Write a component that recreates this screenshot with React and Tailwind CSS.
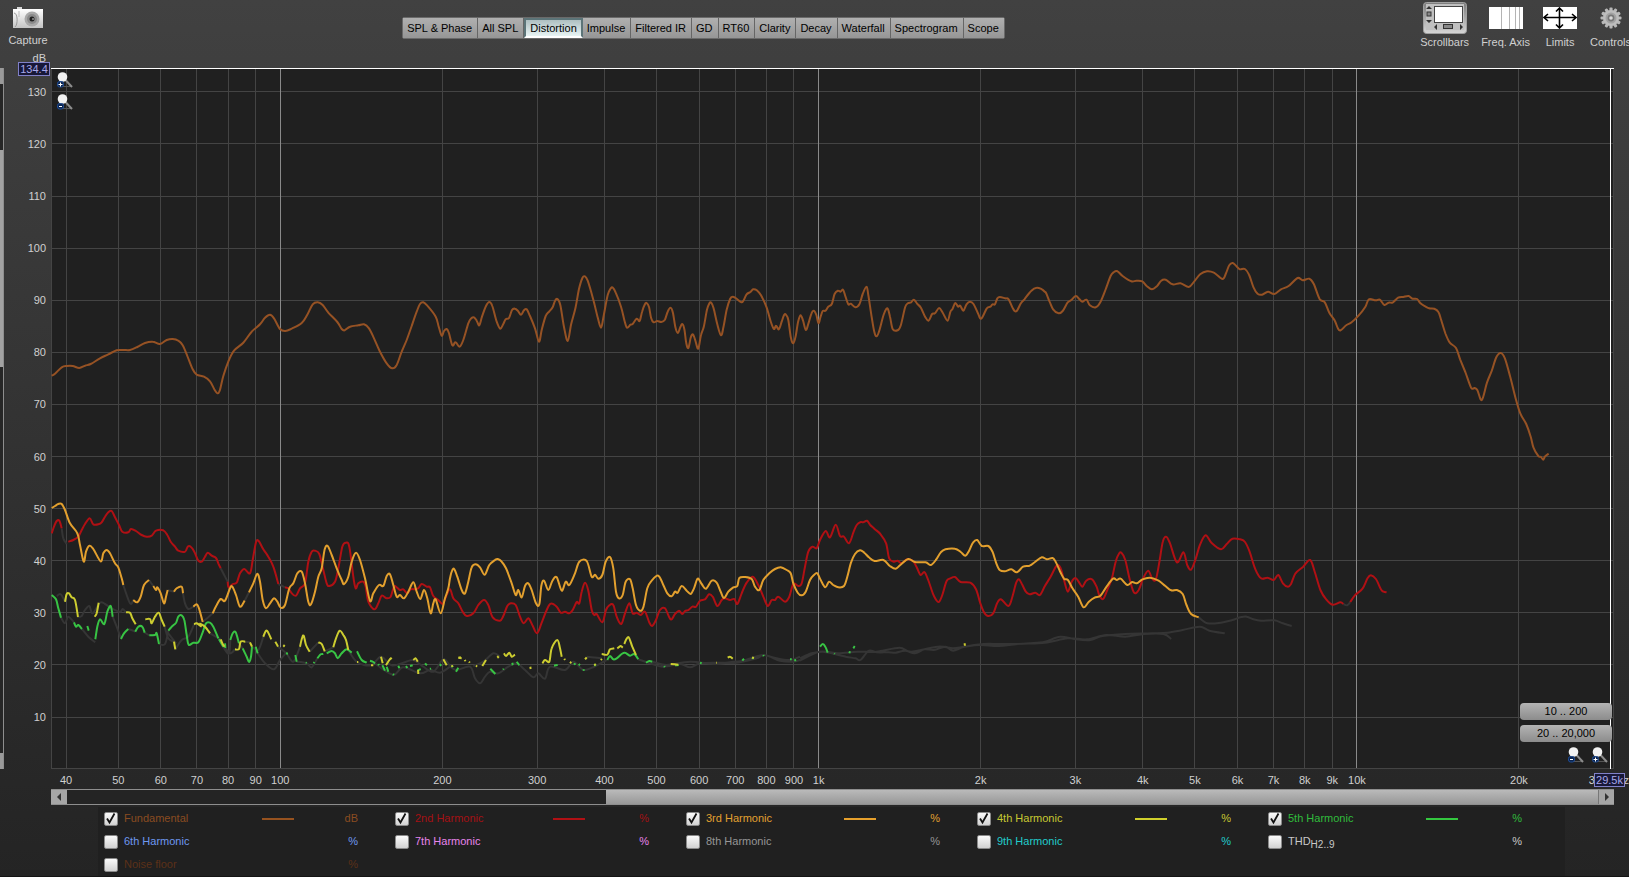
import { useState } from "react";

const PLOT = { x: 51, y: 68, w: 1563, h: 701 };

const freqX = (hz) => 280.3 + 538.3 * Math.log10(hz / 100);
const levelY = (db) => 508.6 - (db - 50) * 5.21;
const leftPct = (x) => `${((x - PLOT.x) / PLOT.w) * 100}%`;
const topPct = (y) => `${((y - PLOT.y) / PLOT.h) * 100}%`;

const TABS = [
  "SPL & Phase",
  "All SPL",
  "Distortion",
  "Impulse",
  "Filtered IR",
  "GD",
  "RT60",
  "Clarity",
  "Decay",
  "Waterfall",
  "Spectrogram",
  "Scope",
];

const LEVELS = [130, 120, 110, 100, 90, 80, 70, 60, 50, 40, 30, 20, 10];

const FREQS = [
  [40, "40"],
  [50, "50"],
  [60, "60"],
  [70, "70"],
  [80, "80"],
  [90, "90"],
  [100, "100"],
  [200, "200"],
  [300, "300"],
  [400, "400"],
  [500, "500"],
  [600, "600"],
  [700, "700"],
  [800, "800"],
  [900, "900"],
  [1000, "1k"],
  [2000, "2k"],
  [3000, "3k"],
  [4000, "4k"],
  [5000, "5k"],
  [6000, "6k"],
  [7000, "7k"],
  [8000, "8k"],
  [9000, "9k"],
  [10000, "10k"],
  [20000, "20k"],
];

const TRACES = [
  { name: "Fundamental", unit: "dB", on: true, text: "text-[#8a4c20]", line: "bg-[#96521f]" },
  { name: "2nd Harmonic", unit: "%", on: true, text: "text-[#a51014]", line: "bg-[#b01014]" },
  { name: "3rd Harmonic", unit: "%", on: true, text: "text-[#e2a030]", line: "bg-[#e6a02c]" },
  { name: "4th Harmonic", unit: "%", on: true, text: "text-[#c8c832]", line: "bg-[#d0d02c]" },
  { name: "5th Harmonic", unit: "%", on: true, text: "text-[#30bc3c]", line: "bg-[#34c840]" },
  { name: "6th Harmonic", unit: "%", text: "text-[#6e98f0]" },
  { name: "7th Harmonic", unit: "%", text: "text-[#e884ec]" },
  { name: "8th Harmonic", unit: "%", text: "text-[#969696]" },
  { name: "9th Harmonic", unit: "%", text: "text-[#20cccc]" },
  { name: "THD", sub: "H2..9", unit: "%", text: "text-[#c8c8c8]" },
  { name: "Noise floor", unit: "%", text: "text-[#5c3018]" },
];

// Measurement blocks: where the block starts, its horizontal resolution and
// one "x,y x,y ..." run per unbroken stretch of the curve.
const BLOCKS = {
  lo: { x: 50, y: 480, sx: 3 },
  mid: { x: 450, y: 480, sx: 3 },
  hi: { x: 800, y: 480, sx: 2.6133 },
  fLo: { x: 50, y: 250, sx: 3 },
  fMid: { x: 500, y: 250, sx: 2.851 },
  fHi: { x: 1040, y: 250, sx: 2.904 },
};

const FUNDAMENTAL = [
  [
    ["fLo", "5,377 15,371 35,352 50,348 68,348 88,354 105,347 122,342 150,325 175,313 200,301 220,300 240,300 262,291 285,279 308,275 330,282 350,270 368,267 385,272 398,286 412,318 428,358 440,374 462,380 480,394 493,418 502,430 509,422 520,378 535,335 552,302 580,278 605,245 630,223 645,203 660,194 672,205 690,237 706,243 725,236 755,219 772,194 788,163 803,157 818,165 835,188 862,216 875,237 884,241 900,230 925,226 942,223 957,235 972,265 990,305 1010,340 1027,355 1040,345 1055,305 1070,270 1085,228 1100,185 1110,162 1120,157 1132,167 1157,200 1166,230 1175,257 1182,243 1190,237 1197,250 1207,286 1215,277 1220,280 1229,290 1240,270 1255,220 1264,205 1272,202 1280,212 1288,226 1296,200 1308,168 1318,156 1327,168 1340,215 1351,236 1360,222 1367,208 1377,204 1386,180 1395,176 1404,183 1413,194 1422,181 1430,178 1440,198 1455,235 1467,275 1475,240 1487,198 1498,184"],
    ["fMid", "150,172 157,152 164,147 172,165 182,228 193,273 203,222 215,175 225,118 235,84 242,79 250,92 265,145 278,200 288,233 295,200 307,135 316,115 322,113 330,128 345,170 355,212 362,233 372,224 378,222 390,206 398,213 405,185 413,163 418,159 425,172 431,205 438,217 448,213 460,216 470,209 478,185 486,173 493,188 500,232 507,249 514,232 520,222 526,240 531,280 537,294 544,262 550,253 556,268 565,296 573,255 581,230 590,180 597,160 602,158 609,175 620,225 630,256 637,232 646,180 656,147 663,140 672,144 688,157 695,150 703,133 714,126 722,118 732,121 744,136 760,172 772,215 781,237 787,227 795,238 803,215 810,195 815,194 822,210 829,262 836,280 843,258 850,215 857,196 864,212 872,240 880,218 888,190 895,182 902,195 908,220 914,200 920,183 928,182 936,170 946,162 954,132 963,122 971,125 978,119 985,140 993,163 1000,161 1013,172 1025,162 1034,132 1045,110 1050,135 1058,190 1067,245 1074,259 1082,240 1092,200 1100,179 1106,177 1112,200 1120,238 1135,240 1143,225 1155,172 1163,160 1172,157 1180,149 1190,162 1200,173 1212,200 1222,212 1232,192 1240,190 1252,174 1262,188 1276,212 1284,185 1290,177 1298,159 1306,170 1312,167 1321,182 1330,163 1340,155 1350,162 1362,188 1372,206 1388,175 1398,170 1404,163 1411,163 1418,145 1425,141 1440,145 1450,148 1462,175 1472,184 1485,160 1495,148 1515,122 1530,113 1545,118 1553,125"],
    ["fHi", "18,130 28,155 38,178 54,190 66,183 80,158 90,151 104,138 115,148 123,155 135,149 145,166 162,172 175,157 190,120 205,78 215,66 225,64 240,78 265,94 280,92 297,94 310,108 325,118 340,108 352,92 365,89 385,103 408,100 432,111 448,94 465,73 485,64 505,68 530,87 540,70 550,45 560,39 570,48 580,58 595,57 607,74 620,112 632,131 645,134 662,125 680,132 700,118 722,108 748,84 763,91 782,86 795,102 812,147 827,157 840,188 856,212 865,235 873,241 890,225 905,217 925,197 945,170 955,148 975,151 987,149 1000,165 1012,158 1025,157 1040,143 1055,141 1070,138 1082,146 1095,147 1105,160 1120,170 1130,175 1145,176 1157,186 1165,210 1178,252 1190,278 1208,294 1220,328 1235,366 1252,413 1262,414 1270,420 1283,450 1298,398 1312,362 1325,322 1338,309 1350,325 1365,378 1380,440 1395,491 1412,522 1425,560 1433,593 1447,618 1455,621 1461,629 1467,619 1477,611"],
  ],
];

const SECOND = [
  [["lo", "5,160 12,140 20,123 28,122 35,145"]],
  [["lo", "55,185 70,180 85,170 95,150 105,132 119,115 130,133 145,133 155,127 165,110 175,97 185,93 195,112 207,135 217,155 235,157 243,147 258,153 275,165 290,170 305,167 318,152 340,151 352,165 362,185 375,200 385,212 405,215 413,200 422,200 433,215 445,242 455,245 464,232 473,218 485,227 498,234 505,250 512,265"]],
  [["lo", "533,305 536,322 548,312 560,308 570,280 583,267 600,280 608,240 618,187 626,183 640,208 655,230 670,260 685,312"]],
  [
    ["lo", "705,322 715,325 725,340 738,347 750,325 765,310 775,245 785,215 795,212 808,222 820,270 830,310 838,318 855,305 865,265 877,200 888,188 898,200 910,290 917,325 925,310 940,305 947,320 955,365 973,388 985,370 995,347 1010,355 1022,350 1032,320 1040,322 1050,330 1060,328 1072,340 1082,328 1095,328 1105,325 1115,312 1130,320 1140,322 1150,348 1165,360 1178,372 1188,350"],
    ["mid", "0,328 10,355 25,370 38,395 50,408 70,400 85,375 102,360 115,375 128,412 150,422 160,408 172,378 182,370 197,375 210,410 221,430 235,415 247,435 261,460 275,428 290,390 302,371 320,380 332,398 345,395 358,400 368,390 380,366 388,370 395,335 405,308 415,332 425,390 433,405 440,402 457,427 468,390 478,376 490,375 500,410 514,432 525,400 538,370 548,400 560,398 572,405 585,395 597,425 606,438 618,420 630,390 645,385 662,418 675,402 687,392 697,402 705,393 715,390 727,380 738,380 750,362 765,358 777,343 788,350 802,378 815,360 825,355 840,360 853,357 862,372 875,340 890,308 908,290 925,315 940,350 953,378 965,360 975,360 985,350 1005,365 1018,350 1030,312 1045,318 1055,310 1065,260 1075,215 1087,200 1100,205 1110,180 1127,153 1140,172 1157,134 1170,168 1182,170 1197,190 1210,158 1220,135 1232,126"],
    ["hi", "165,127 175,122 183,134 195,147 210,162 225,190 233,235 245,245 255,242 265,250 280,238 295,243 305,262 315,285 325,276 335,300 347,340 355,358 363,366 372,345 383,303 393,295 405,291 420,306 445,308 460,328 470,365 480,395 491,408 505,400 515,370 525,358 545,378 555,350 565,308 572,298 580,312 590,335 600,343 615,338 627,345 640,318 655,290 670,258 680,262 690,300 700,335 710,305 720,294 728,305 738,320 748,302 763,298 775,320 782,345 792,357 803,330 815,295 825,245 833,222 840,218 850,240 862,300 873,338 885,330 897,295 910,272 920,295 930,298 940,240 948,185 957,170 967,190 985,247 1002,217 1012,255 1022,269 1033,240 1045,195 1060,166 1075,188 1100,208 1115,192 1130,176 1150,178 1163,186 1175,215 1190,268 1205,295 1222,293 1238,300 1250,285 1262,310 1275,320 1283,312 1295,280 1315,260 1333,240 1345,275 1360,330 1375,358 1392,374 1412,367 1420,372"],
  ],
  [["hi", "1438,366 1450,346 1470,326 1483,295 1492,286 1505,297 1518,328 1525,335 1533,337"]],
];

const THIRD = [
  [["lo", "5,84 15,78 25,72 35,72 45,90 60,130 82,160 90,195 101,245 108,215 118,197 130,207 152,244 160,220 170,210 180,220 195,250 205,262 215,295 220,315"]],
  [["lo", "250,360 262,367 272,350 282,315 297,300"]],
  [["lo", "310,318 318,330 322,322 332,340 342,370 348,350 353,330"]],
  [["lo", "372,335 380,325 395,320 399,340"]],
  [["lo", "430,380 440,373 447,385 458,426"]],
  [["lo", "488,400 500,375 512,357 525,362 540,325 547,320 558,345 570,380 584,362"]],
  [
    ["lo", "597,337 610,310 622,281 630,305 638,360 648,385 660,370 672,355 682,365 692,383 705,375 718,325 730,310 742,280 755,275 765,310 775,365 783,373 795,335 805,290 815,265 824,208 833,198 845,225 860,265 875,300 882,312 895,290 905,245 918,218 930,240 945,295 960,363 970,340 987,315 1000,318 1010,288 1020,283 1030,315 1040,350 1050,345 1062,355 1075,335 1090,307 1100,335 1111,357 1122,330 1132,355 1142,400 1150,370 1157,358 1172,400 1185,355 1195,325"],
    ["mid", "0,295 5,275 12,266 22,290 35,330 45,340 55,305 65,262 77,253 90,262 104,284 118,255 135,240 143,237 155,245 168,265 185,310 197,345 205,330 215,352 225,318 235,310 245,330 258,370 268,373 274,318 282,302 295,330 307,303 320,292 335,332 347,305 358,315 375,280 388,245 410,243 425,290 435,284 445,296 457,285 467,245 480,231 490,265 498,335 507,355 518,345 527,305 540,298 548,325 558,375 570,392 580,382 592,325 605,302 625,287 640,315 652,340 665,349 675,335 683,338 695,318 710,332 722,342 732,325 743,296 755,312 768,326 785,302 800,308 812,335 822,354 835,335 850,322 862,318 868,294 885,291 905,297 915,320 928,330 940,300 958,280 975,267 992,262 1010,270 1022,280 1030,310 1043,338 1055,346 1067,335 1080,300 1092,285 1102,280 1112,300 1126,322 1137,305 1150,315 1165,322 1182,318 1192,290 1203,248 1215,222 1230,211"],
    ["hi", "168,218 180,232 195,243 218,240 235,258 250,266 262,255 283,237 300,246 328,247 342,255 355,240 368,217 380,208 405,206 420,216 432,227 442,212 452,188 463,180 475,198 492,198 503,215 513,250 522,270 535,274 552,268 567,277 583,260 600,257 615,245 632,232 645,238 660,234 668,245 680,275 690,296 700,300 712,325 727,350 741,382 755,365 770,353 785,347 800,322 818,296 828,300 838,296 855,315 868,306 880,310 895,298 915,293 937,302 955,318 970,331 985,330 1000,342 1010,375 1022,402 1042,412"],
  ],
];

const split = (block, text) => text.split("|").map((run) => [[block, run.trim()]]);

const FOURTH = [
  ...split("lo", "45,365 50,342 57,340 65,352 75,360 84,411|134,410 140,400 146,368|228,397 240,398 247,415 257,433|286,418 300,417 305,430 315,410 326,398 335,420 344,440|372,485 376,508|432,433 440,430 455,440|448,430 465,440 480,460|512,478 518,492 524,500|555,508 567,507 572,485 586,485|600,487 606,500|640,470 648,452 655,458 664,478|676,485 684,500|700,500 704,495|750,500 755,478 761,467 768,495 779,515|805,487 815,492 824,514|850,502 858,475 869,452 880,465 888,480 895,510|921,546 925,546|963,556 970,556|993,530 998,550|1008,556 1018,540 1025,533|1090,540 1097,535 1103,545|1104,570 1105,582|1180,538 1190,556|1225,534 1233,532"),
  ...split("mid", "5,556 8,560|25,533 35,535|44,540 47,543|57,545 59,548|78,557 81,560|97,558 108,540|142,528 146,534|162,520 168,528 178,518 185,530 195,524|241,560 242,567|277,550 285,540 298,545 305,505 322,480 330,505 335,530|343,536 345,540|360,545 364,550|405,538 410,532|433,556 437,552|452,540 456,537|455,522 472,524 480,508 493,505|502,505 512,498 518,503|523,492 530,476 537,473 547,500 558,525|662,552 685,554|798,548 800,548|833,533 840,530 848,536|908,536 910,530"),
  ...split("hi", "430,490 431,497"),
];

const FIFTH = [
  ...split("lo", "5,345 18,358 25,385 33,413|72,427 78,440 85,435 96,447|112,438 116,452|136,478 142,440 150,418 163,432 172,395 182,378 188,410|213,477 222,460 235,447|256,455 265,440 277,440 284,458|298,466 315,465 320,460 327,492|355,452 365,440 378,428 385,410 395,406 403,420 410,465 416,494 430,488 445,487 457,460 468,430 480,428 490,440 505,475|507,478 520,500|525,490 526,504|541,480 548,460 557,457 567,490|578,505 590,530 597,546 603,530 606,500|617,500 623,520|709,518 713,523|736,525 740,545|767,548 770,549|791,550 793,546|802,535 812,523 820,522|830,520 845,513 855,520 863,535 875,520 890,508 905,518|921,514 935,540 950,548|960,542 968,545 975,550|985,552 987,556|997,556 1005,572|1010,560 1015,575|1028,583 1033,584|1045,557 1048,565|1068,558 1072,564|1080,558 1088,556|1102,572 1112,567|1125,550 1131,556|1140,567 1143,565|1170,552 1173,558"),
  ...split("mid", "6,557 8,562|18,575 25,563|121,566 136,582|160,569 161,566|187,548 188,556|200,545 208,556|312,557 323,555|372,550 376,554|386,552 390,556|400,568 402,572|433,557 437,553|472,540 480,528 490,538 500,535 515,522 525,518 540,527 553,522 565,538|588,548 598,543 607,545|643,558 644,562|675,556 686,555|750,548 755,550|877,542 882,536|907,537 910,532|940,525 941,529|1020,538 1025,538|1035,538 1036,544|1110,500 1118,492 1126,500 1133,518|1153,520 1154,522|1198,520 1200,514|1210,505 1214,498"),
];

// Stretches that sit below the noise floor
const MASKED = [
  ...split("lo", "35,145 40,175 50,192|512,265 533,305|685,312 705,322|220,315 240,370 250,360|297,300 310,318|353,330 372,335|399,340 405,370 415,387 430,380|458,426 488,400|584,362 597,337|20,348 32,343 45,365|84,411 95,408 105,390 118,378 128,400 150,368 165,372 185,385 210,395 218,387 228,397|344,440 355,475 372,485|376,508 395,480 415,470 432,433|480,460 512,478|524,500 540,520 555,508|586,485 600,487|606,500 625,510 640,470|684,500 709,520 730,545 750,500|779,515 805,487|824,514 850,502|895,510 921,546 963,556 993,530 1025,556 1060,548 1090,540 1120,560 1150,575 1180,538 1200,558|33,413 45,430 55,410 72,427|96,447 115,470 136,487|188,410 200,440 213,477|235,447 256,455|284,458 298,466|327,492 345,492 355,452|355,460 378,490|505,475 535,522 541,480|567,490 578,505|623,520 645,550 672,568 690,540 709,518|740,545 770,550 785,562 802,535|975,550 1005,572 1033,584 1060,562 1110,580 1140,570 1170,578 1200,560"),
  ...split("mid", "0,560 20,570 60,560 75,595 90,610 105,590 120,575 145,580 175,560 200,550 225,570 250,592 265,580 285,596 300,560 345,570 370,545 400,570 433,560 470,540|70,558 100,545 130,520 150,530|410,530 455,535|565,538 600,550 640,560 690,552 720,562 750,550 800,548 860,548 920,535 940,525 980,535 1020,540 1050,530|607,545 650,555 720,545 800,552 850,545 880,542 940,525 990,542 1030,545 1050,540"),
  ...split("hi", "0,535 30,520 60,515 90,522 120,530 145,535 158,540 180,512 200,517 230,517 250,518 275,512 300,520 325,508 350,510 380,500 400,512 430,500 480,492 520,492 560,492 600,490 640,485 680,470 720,478 760,480 790,468 850,462 920,460 960,458 1000,450 1045,440 1070,452 1110,460|0,542 50,515 100,520 150,515 200,515 260,503 290,515 360,500 400,505 430,500 470,495 520,498 570,492 640,488 700,475 750,478 800,465 850,470 900,462 950,462 970,477|1042,412 1065,430 1100,428 1130,420 1150,412 1168,410 1185,418 1205,422 1240,421 1262,430 1285,438|1420,372 1430,376 1438,366"),
];

const toPoints = (run) =>
  run.flatMap(([key, text]) => {
    const b = BLOCKS[key];
    return text.split(" ").map((pair) => {
      const [x, y] = pair.split(",").map(Number);
      return [b.x + x / b.sx, b.y + y / 3];
    });
  });

// Catmull-Rom spline through the points
const toPath = (p) => {
  let d = `M${p[0][0].toFixed(1)} ${p[0][1].toFixed(1)}`;
  for (let i = 0; i < p.length - 1; i++) {
    const a = p[i - 1] || p[i];
    const b = p[i];
    const c = p[i + 1];
    const e = p[i + 2] || c;
    const n = [
      b[0] + (c[0] - a[0]) / 6,
      b[1] + (c[1] - a[1]) / 6,
      c[0] - (e[0] - b[0]) / 6,
      c[1] - (e[1] - b[1]) / 6,
      c[0],
      c[1],
    ].map((v) => v.toFixed(1));
    d += `C${n.join(" ")}`;
  }
  return d;
};

const Curve = ({ runs, stroke }) => (
  <path
    d={runs.map((run) => toPath(toPoints(run))).join("")}
    fill="none"
    stroke={stroke}
    strokeWidth="2"
    strokeLinejoin="round"
    vectorEffect="non-scaling-stroke"
  />
);

const Graph = ({ shown }) => (
  <svg
    className="absolute inset-0 size-full"
    viewBox={`${PLOT.x} ${PLOT.y} ${PLOT.w} ${PLOT.h}`}
    preserveAspectRatio="none"
    aria-hidden="true"
  >
    <g shapeRendering="crispEdges" strokeWidth="1">
      {LEVELS.map((db) => (
        <line key={db} x1="51" x2="1614" y1={levelY(db)} y2={levelY(db)} stroke="#444444" />
      ))}
      {FREQS.map(([hz]) => (
        <line
          key={hz}
          x1={freqX(hz)}
          x2={freqX(hz)}
          y1="68"
          y2="769"
          stroke={[100, 1000, 10000].includes(hz) ? "#8a8a8a" : "#444444"}
        />
      ))}
      <path d="M51.5 68V768.5H1613.5V68" fill="none" stroke="#444444" />
    </g>
    <Curve runs={MASKED} stroke="#353535" />
    {shown["5th Harmonic"] && <Curve runs={FIFTH} stroke="#38c444" />}
    {shown["4th Harmonic"] && <Curve runs={FOURTH} stroke="#cdcd30" />}
    {shown["2nd Harmonic"] && <Curve runs={SECOND} stroke="#b01014" />}
    {shown["3rd Harmonic"] && <Curve runs={THIRD} stroke="#e3a02e" />}
    {shown["Fundamental"] && <Curve runs={FUNDAMENTAL} stroke="#965224" />}
    <path d="M51 68.5H1614M1610.5 68V769" stroke="#ffffff" strokeWidth="1" shapeRendering="crispEdges" />
  </svg>
);

const CameraIcon = () => (
  <svg width="32" height="22" viewBox="0 0 32 22" aria-hidden="true">
    <defs>
      <linearGradient id="cam" x1="0" y1="0" x2="0" y2="1">
        <stop offset="0" stopColor="#ffffff" />
        <stop offset="1" stopColor="#c4c4c4" />
      </linearGradient>
    </defs>
    <rect x="5" y="0" width="5" height="3" fill="#d8d8d8" />
    <rect x="1" y="2" width="30" height="19" fill="url(#cam)" />
    <path d="M2 6c4 0 4 12 1 14" fill="none" stroke="#999" />
    <path d="M7 4v6" stroke="#bbb" />
    <circle cx="20" cy="12" r="7.5" fill="#a8a8a8" />
    <circle cx="20" cy="12" r="5" fill="#8a8a8a" />
    <circle cx="20" cy="12" r="2.5" fill="#222" />
    <circle cx="21" cy="12" r="0.8" fill="#ddd" />
  </svg>
);

const ScrollbarsIcon = () => (
  <svg width="44" height="32" viewBox="0 0 44 32" aria-hidden="true">
    <defs>
      <linearGradient id="pressed" x1="0" y1="0" x2="0" y2="1">
        <stop offset="0" stopColor="#7c7c7c" />
        <stop offset="1" stopColor="#d6d6d6" />
      </linearGradient>
    </defs>
    <rect x="0.5" y="0.5" width="43" height="31" rx="3" fill="url(#pressed)" stroke="#a0a0a0" />
    <rect x="3" y="2" width="38" height="26" fill="#c0c0c0" />
    <rect x="11.5" y="4.5" width="28" height="16" fill="#fff" stroke="#444" />
    <path d="M6 4l3 3H3zM6 21l-3-3h6z" fill="#333" />
    <rect x="4" y="10" width="4" height="4" fill="#888" stroke="#333" />
    <path d="M11 25l3-3v6zM40 25l-3-3v6z" fill="#333" />
    <rect x="20.5" y="22.5" width="9" height="4" fill="#888" stroke="#333" />
  </svg>
);

const AxisIcon = () => (
  <svg width="34" height="22" viewBox="0 0 34 22" aria-hidden="true">
    <rect width="34" height="22" fill="#fff" />
    <path d="M12.5 0v22M20.5 0v22M26.5 0v22M30.5 0v22" stroke="#b4b4b4" />
  </svg>
);

const LimitsIcon = () => (
  <svg width="34" height="22" viewBox="0 0 34 22" aria-hidden="true">
    <rect width="34" height="22" fill="#fff" />
    <path
      d="M1.5 10.5h31M16.5 1v20M5 7l-4 3.500L5 14M29 7l4 3.500L29 14M13 4.500L16.500 1L20 4.500M13 17.500L16.500 21L20 17.500"
      fill="none"
      stroke="#000"
      strokeWidth="1.6"
    />
  </svg>
);

const GearIcon = () => (
  <svg width="22" height="22" viewBox="-11 -11 22 22" aria-hidden="true">
    {[0, 30, 60, 90, 120, 150].map((a) => (
      <rect key={a} x="-1.6" y="-10.5" width="3.2" height="21" rx="1" fill="#b8b8b8" transform={`rotate(${a})`} />
    ))}
    <circle r="8" fill="#bdbdbd" />
    <circle r="5.5" fill="#a2a2a2" />
    <circle r="3.4" fill="#777" />
    <circle r="1.8" fill="#d8d8d8" />
  </svg>
);

const ZoomButton = ({ label, minus }) => (
  <button type="button" aria-label={label} className="block">
    <svg width="16" height="16" viewBox="0 0 16 16" aria-hidden="true">
      <path d="M4 14.500h11" stroke="#555" />
      <path d="M8.500 8L15 15" stroke="#8c8c8c" strokeWidth="2" />
      <circle cx="5.500" cy="5" r="4.800" fill="#f2f2f2" />
      <rect x="0.500" y="9.500" width="6" height="5.500" rx="2" fill="#0c2550" stroke="#1f4c94" />
      <path d={minus ? "M2 12.500h3" : "M1.500 12.500h4M3.500 10.500v4"} stroke="#fff" />
    </svg>
  </button>
);

const ToolButton = ({ label, children }) => (
  <button type="button" className="flex min-w-9 flex-col items-center">
    <span className="flex h-[35px] items-center">{children}</span>
    <span className="leading-[14px]">{label}</span>
  </button>
);

const RangeButton = ({ children }) => (
  <button
    type="button"
    className="h-[17px] w-[92px] rounded-sm bg-linear-to-b from-[#b4b4b4] to-[#8c8c8c] leading-[17px] text-black"
  >
    {children}
  </button>
);

const Arrow = ({ d }) => (
  <svg width="6" height="8" viewBox="0 0 6 8" aria-hidden="true">
    <path d={d} fill="#333" />
  </svg>
);

const TraceToggle = ({ trace, checked, onChange }) => (
  <label className={`flex h-[23px] items-center pr-[37px] ${trace.text}`}>
    <span className="relative mr-1.5 size-3.5">
      <input
        type="checkbox"
        checked={checked}
        onChange={onChange}
        className="block size-3.5 appearance-none rounded-xs border border-[#8a8a8a] bg-linear-to-b from-[#fafafa] to-[#d2d2d2]"
      />
      {checked && (
        <svg className="pointer-events-none absolute inset-0" width="14" height="14" viewBox="0 0 14 14" aria-hidden="true">
          <path d="M3 6.500L5.500 10.500L10.500 1.500" fill="none" stroke="#111" strokeWidth="1.800" />
        </svg>
      )}
    </span>
    <span className="flex-1 whitespace-nowrap">
      {trace.name}
      {trace.sub && <sub className="text-[10px]">{trace.sub}</sub>}
    </span>
    {checked && trace.line && <span className={`h-0.5 w-8 ${trace.line}`} />}
    <span className="w-16 text-right">{trace.unit}</span>
  </label>
);

const App = () => {
  const [tab, setTab] = useState("Distortion");
  const [shown, setShown] = useState(
    Object.fromEntries(TRACES.map((t) => [t.name, Boolean(t.on)]))
  );

  return (
    <div className="flex min-h-screen flex-col overflow-hidden bg-linear-to-b from-[#414141] to-[#242424] font-['Liberation_Sans',Arial,sans-serif] text-[11px] text-[#d0d0d0]">
      <header className="flex h-[68px] items-start">
        <button type="button" className="flex w-14 flex-col items-center pt-[7px]">
          <CameraIcon />
          <span className="mt-1 leading-[14px]">Capture</span>
        </button>
        <div className="flex-[5]" />
        <nav className="mt-[17px] flex rounded-xs border border-[#6a6a6a] bg-[#6a6a6a]">
          {TABS.map((name) => (
            <button
              key={name}
              type="button"
              onClick={() => setTab(name)}
              className={
                name === tab
                  ? "h-5 border-2 border-[#5c7478] border-b-white bg-linear-to-b from-[#aebfc1] to-[#e8f4f4] px-1 text-black"
                  : "h-5 border-r border-[#666] bg-linear-to-b from-[#b0b0b0] to-[#969696] pr-[5px] pl-1 text-black last:border-r-0"
              }
            >
              {name}
            </button>
          ))}
        </nav>
        <div className="flex-[6]" />
        <div className="-mr-0.5 flex gap-3">
          <ToolButton label="Scrollbars">
            <ScrollbarsIcon />
          </ToolButton>
          <ToolButton label="Freq. Axis">
            <AxisIcon />
          </ToolButton>
          <ToolButton label="Limits">
            <LimitsIcon />
          </ToolButton>
          <ToolButton label="Controls">
            <GearIcon />
          </ToolButton>
        </div>
      </header>

      <main className="flex min-h-[400px] flex-1 pr-[15px]">
        <div className="flex w-1 flex-col border-r border-[#8e8e8e] bg-[#262626]">
          <div className="h-4 bg-[#9a9a9a]" />
          <div className="flex-[66]" />
          <div className="flex-[217] bg-[#a2a2a2]" />
          <div className="flex-[386]" />
          <div className="h-4 bg-[#9a9a9a]" />
        </div>

        <div className="relative w-[47px]">
          <span className="absolute -top-[17px] right-[5px] leading-[14px]">dB</span>
          {LEVELS.map((db) => (
            <span
              key={db}
              className="absolute right-[5px] -translate-y-1/2 leading-[14px]"
              style={{ top: topPct(levelY(db)) }}
            >
              {db}
            </span>
          ))}
          <span className="absolute -top-1.5 right-px h-3.5 w-8 border border-[#8080c8] bg-[#181838] text-center leading-3 text-[#a8a8e8]">
            134.4
          </span>
        </div>

        <div className="relative flex-1 bg-[#202020]">
          <Graph shown={shown} />
          <div className="absolute top-1 left-1.5 flex flex-col gap-1.5">
            <ZoomButton label="Zoom in vertically" />
            <ZoomButton label="Zoom out vertically" minus />
          </div>
          <div className="absolute right-0.5 bottom-1.5 flex flex-col items-end gap-[5px]">
            <RangeButton>10 .. 200</RangeButton>
            <RangeButton>20 .. 20,000</RangeButton>
            <div className="flex gap-2 pr-1">
              <ZoomButton label="Zoom out horizontally" minus />
              <ZoomButton label="Zoom in horizontally" />
            </div>
          </div>
        </div>
      </main>

      <div className="relative mr-[15px] ml-[51px] h-5">
        {FREQS.map(([hz, label]) => (
          <span
            key={hz}
            className="absolute top-1 -translate-x-1/2 leading-[14px]"
            style={{ left: leftPct(freqX(hz)) }}
          >
            {label}
          </span>
        ))}
        <span className="absolute top-1 -right-[15px] leading-[14px]">30.0kHz</span>
        <span className="absolute top-1 -right-[11px] h-3.5 w-[31px] border border-[#8080c8] bg-[#181838] text-center leading-3 text-[#a8a8e8]">
          29.5k
        </span>
      </div>

      <div className="mr-[15px] ml-[51px] flex h-4 border-y border-[#8e8e8e] bg-[#242424]">
        <button type="button" aria-label="Scroll left" className="flex w-4 items-center justify-center bg-[#a6a6a6]">
          <Arrow d="M5 0L1 4L5 8z" />
        </button>
        <div className="flex-[539]" />
        <div className="flex-[992] bg-linear-to-b from-[#bababa] to-[#989898]" />
        <button
          type="button"
          aria-label="Scroll right"
          className="flex w-4 items-center justify-center border-l border-[#777] bg-[#a6a6a6]"
        >
          <Arrow d="M1 0L5 4L1 8z" />
        </button>
      </div>

      <section className="mt-0.5 mr-16 ml-[98px] grid grid-cols-5 bg-[#202020] px-1.5">
        {TRACES.map((trace) => (
          <TraceToggle
            key={trace.name}
            trace={trace}
            checked={shown[trace.name]}
            onChange={() => setShown({ ...shown, [trace.name]: !shown[trace.name] })}
          />
        ))}
      </section>
      <div className="h-px bg-[#141414]" />
    </div>
  );
};

export default App;
